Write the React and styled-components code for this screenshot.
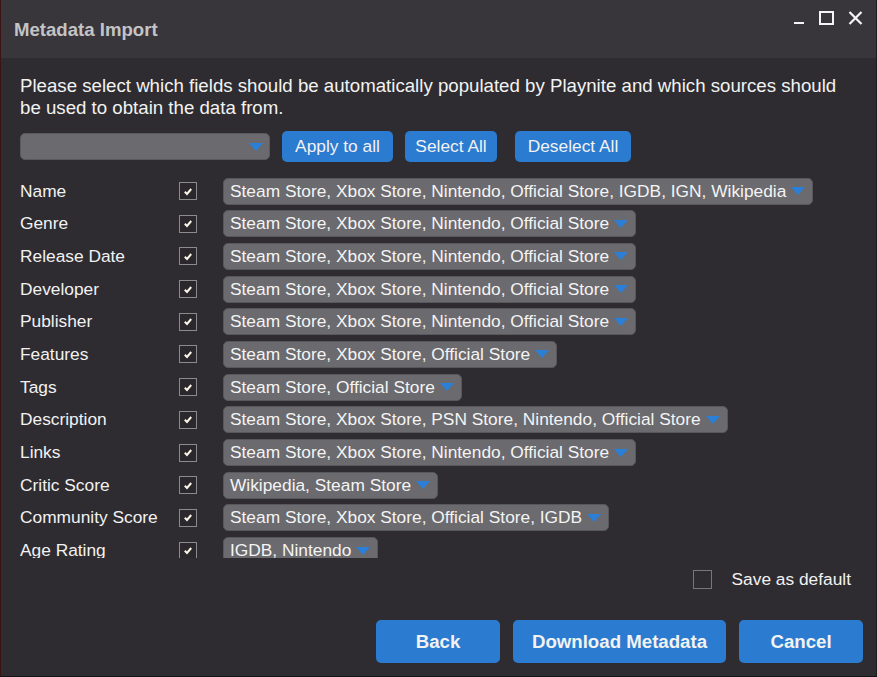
import styled, { createGlobalStyle } from "styled-components";

const Global = createGlobalStyle`
  html, body {
    margin: 0;
    padding: 0;
    background: #2e2c31;
  }
  body {
    font-family: "Liberation Sans", Arial, sans-serif;
  }
  * {
    box-sizing: border-box;
  }
`;

const Window = styled.div`
  width: 877px;
  height: 677px;
  display: flex;
  flex-direction: column;
  background: #2e2c31;
  border-left: 1px solid #3a1414;
  border-right: 1px solid #1d1c21;
  border-bottom: 1px solid #131316;
  color: #f2f2f2;
  overflow: hidden;
`;

const TitleBar = styled.div`
  height: 58px;
  flex-shrink: 0;
  display: flex;
  align-items: center;
  padding: 0 13px 0 13px;
  background: #38363b;
`;

const Title = styled.div`
  flex: 1;
  font-size: 18.6px;
  font-weight: bold;
  color: #c4c4c6;
  margin-top: 1px;
`;

const WinControls = styled.div`
  display: flex;
  align-items: center;
  gap: 14px;
  margin-top: -22px;
  color: #f4f4f4;

  svg {
    display: block;
  }
`;

const Body = styled.div`
  flex: 1;
  display: flex;
  flex-direction: column;
  min-height: 0;
`;

const Description = styled.p`
  margin: 17px 30px 0 19px;
  font-size: 18.67px;
  line-height: 21.5px;
  color: #f2f2f2;
`;

const ScrollArea = styled.div`
  margin: 13px 8px 0 19px;
  height: 427px;
  flex-shrink: 0;
  overflow-y: scroll;

  &::-webkit-scrollbar {
    width: 8px;
  }
  &::-webkit-scrollbar-track {
    background: transparent;
  }
  &::-webkit-scrollbar-thumb {
    background: #6f7275;
    border-radius: 4px;
  }
`;

const Toolbar = styled.div`
  display: flex;
  align-items: center;
  gap: 12px;
  height: 31px;
  margin-bottom: 12.7px;
`;

const Combo = styled.div`
  width: 250px;
  height: 27px;
  display: flex;
  align-items: center;
  justify-content: flex-end;
  padding-right: 6px;
  background: #6b6a6e;
  border: 1px solid #5a595d;
  border-radius: 5px;
`;

const Arrow = styled.span`
  display: inline-block;
  width: 0;
  height: 0;
  border-left: 7.5px solid transparent;
  border-right: 7.5px solid transparent;
  border-top: 8px solid #2b7fd6;
  margin-left: ${(p) => p.$gap || 0}px;
  flex-shrink: 0;
`;

const Button = styled.button`
  height: ${(p) => (p.$big ? 43 : 31)}px;
  width: ${(p) => (p.$w ? `${p.$w}px` : "auto")};
  padding: 0;
  margin-left: ${(p) => p.$ml || 0}px;
  background: #2b7bd0;
  color: #f2f2f2;
  border: none;
  border-radius: 5px;
  font-family: "Liberation Sans", Arial, sans-serif;
  font-size: ${(p) => (p.$big ? 18.67 : 17.33)}px;
  font-weight: ${(p) => (p.$big ? "bold" : "normal")};
  cursor: pointer;
`;

const Row = styled.div`
  display: grid;
  grid-template-columns: 159px 44px auto;
  align-items: center;
  height: 32.7px;
`;

const Label = styled.div`
  font-size: 17.33px;
  color: #f2f2f2;
  white-space: nowrap;
`;

const Check = styled.span`
  width: 18px;
  height: 18px;
  display: flex;
  align-items: center;
  justify-content: center;
  border: 1px solid #8b8b8e;
  background: #2a282d;

  svg {
    display: block;
  }
`;

const Sources = styled.div`
  justify-self: start;
  height: 27px;
  display: flex;
  align-items: center;
  padding: 0 7px 0 6px;
  background: #6b6a6e;
  border: 1px solid #58575b;
  border-radius: 5px;
  font-size: 17.33px;
  color: #f4f4f4;
  white-space: nowrap;
`;

const SaveRow = styled.div`
  display: flex;
  justify-content: flex-end;
  align-items: center;
  gap: 20px;
  padding-right: 25px;
  margin-top: 11px;
  font-size: 17.33px;
  color: #f2f2f2;
`;

const EmptyCheck = styled.span`
  width: 19px;
  height: 19px;
  border: 1px solid #77767a;
`;

const Footer = styled.div`
  display: flex;
  justify-content: flex-end;
  align-items: center;
  gap: 13px;
  padding: 0 13px 0 0;
  margin-top: 30px;
`;

const fields = [
  ["Name", "Steam Store, Xbox Store, Nintendo, Official Store, IGDB, IGN, Wikipedia"],
  ["Genre", "Steam Store, Xbox Store, Nintendo, Official Store"],
  ["Release Date", "Steam Store, Xbox Store, Nintendo, Official Store"],
  ["Developer", "Steam Store, Xbox Store, Nintendo, Official Store"],
  ["Publisher", "Steam Store, Xbox Store, Nintendo, Official Store"],
  ["Features", "Steam Store, Xbox Store, Official Store"],
  ["Tags", "Steam Store, Official Store"],
  ["Description", "Steam Store, Xbox Store, PSN Store, Nintendo, Official Store"],
  ["Links", "Steam Store, Xbox Store, Nintendo, Official Store"],
  ["Critic Score", "Wikipedia, Steam Store"],
  ["Community Score", "Steam Store, Xbox Store, Official Store, IGDB"],
  ["Age Rating", "IGDB, Nintendo"],
  ["Series", "Wikipedia, IGDB"],
  ["Region", "IGDB"],
  ["Platform", "Steam Store, Xbox Store, Nintendo"],
  ["Cover Image", "Steam Store, Official Store, IGDB"],
  ["Background Image", "Steam Store, IGDB"],
  ["Icon", "Steam Store, Official Store"],
  ["Install Size", "Steam Store"],
];

function CheckMark() {
  return (
    <svg width="10" height="9" viewBox="0 0 10 9">
      <path d="M1.8 4.8 L4 7 L8.2 2" fill="none" stroke="#fbf6e6" strokeWidth="2" />
    </svg>
  );
}

function App() {
  return (
    <Window>
      <Global />
      <TitleBar>
        <Title>Metadata Import</Title>
        <WinControls>
          <svg width="12" height="14" viewBox="0 0 12 14">
            <rect x="1" y="11" width="10" height="2" fill="currentColor" />
          </svg>
          <svg width="15" height="14" viewBox="0 0 15 14">
            <rect x="1" y="1" width="13" height="12" fill="none" stroke="currentColor" strokeWidth="2" />
          </svg>
          <svg width="15" height="14" viewBox="0 0 15 14">
            <path d="M1.5 1 L13.5 13 M13.5 1 L1.5 13" stroke="currentColor" strokeWidth="2.2" />
          </svg>
        </WinControls>
      </TitleBar>
      <Body>
        <Description>
          Please select which fields should be automatically populated by Playnite and which sources should be used to
          obtain the data from.
        </Description>
        <ScrollArea>
          <Toolbar>
            <Combo>
              <Arrow />
            </Combo>
            <Button $w={111}>Apply to all</Button>
            <Button $w={92}>Select All</Button>
            <Button $w={116} $ml={6}>Deselect All</Button>
          </Toolbar>
          {fields.map(([name, src]) => (
            <Row key={name}>
              <Label>{name}</Label>
              <Check>
                <CheckMark />
              </Check>
              <Sources>
                {src}
                <Arrow $gap={5} />
              </Sources>
            </Row>
          ))}
        </ScrollArea>
        <SaveRow>
          <EmptyCheck />
          Save as default
        </SaveRow>
        <Footer>
          <Button $big $w={124}>Back</Button>
          <Button $big $w={213}>Download Metadata</Button>
          <Button $big $w={124}>Cancel</Button>
        </Footer>
      </Body>
    </Window>
  );
}

export default App;
